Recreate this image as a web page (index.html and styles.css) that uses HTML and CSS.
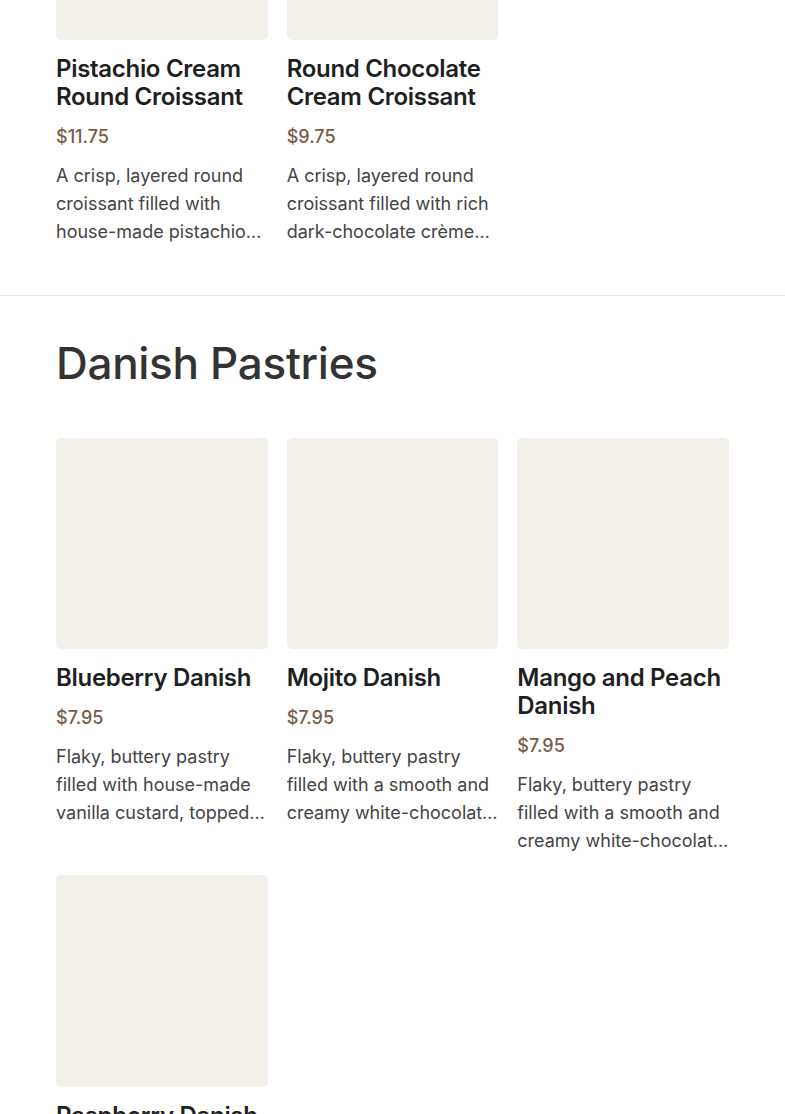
FILE: index.html
```html
<!DOCTYPE html>
<html>
<head>
<meta charset="utf-8">
<link rel="stylesheet" href="styles.css">
</head>
<body>
<main class="page">
  <section class="menu-section first">
    <div class="grid">
      <article class="item">
        <div class="thumb"></div>
        <h3 class="name">Pistachio Cream Round Croissant</h3>
        <div class="price">$11.75</div>
        <p class="desc">A crisp, layered round croissant filled with house-made pistachio cream, finished with crushed pistachios.</p>
      </article>
      <article class="item">
        <div class="thumb"></div>
        <h3 class="name">Round Chocolate Cream Croissant</h3>
        <div class="price">$9.75</div>
        <p class="desc">A crisp, layered round croissant filled with rich dark-chocolate crème pâtissière and finished with chocolate.</p>
      </article>
    </div>
  </section>
  <section class="menu-section">
    <h2 class="section-title">Danish Pastries</h2>
    <div class="grid">
      <article class="item">
        <div class="thumb"></div>
        <h3 class="name">Blueberry Danish</h3>
        <div class="price">$7.95</div>
        <p class="desc">Flaky, buttery pastry filled with house-made vanilla custard, topped with fresh blueberries.</p>
      </article>
      <article class="item">
        <div class="thumb"></div>
        <h3 class="name">Mojito Danish</h3>
        <div class="price">$7.95</div>
        <p class="desc">Flaky, buttery pastry filled with a smooth and creamy white-chocolate mint cream with lime.</p>
      </article>
      <article class="item">
        <div class="thumb"></div>
        <h3 class="name">Mango and Peach Danish</h3>
        <div class="price">$7.95</div>
        <p class="desc">Flaky, buttery pastry filled with a smooth and creamy white-chocolate cream, mango and peach.</p>
      </article>
      <article class="item">
        <div class="thumb"></div>
        <h3 class="name">Raspberry Danish</h3>
        <div class="price">$7.95</div>
        <p class="desc">Flaky, buttery pastry filled with house-made vanilla custard and raspberries.</p>
      </article>
    </div>
  </section>
</main>
</body>
</html>
```
FILE: styles.css
```css
html, body {
  margin: 0;
  padding: 0;
  background: #ffffff;
}
body {
  font-family: Inter, "Liberation Sans", sans-serif;
  color: #222222;
}
.page {
  margin-top: -172px;
}
.menu-section {
  padding: 0 56px 49px;
  border-bottom: 1px solid #e6e6e6;
}
.menu-section + .menu-section {
  padding-top: 41px;
  border-bottom: none;
}
.section-title {
  margin: 0 0 49px;
  font-size: 44px;
  line-height: 52px;
  font-weight: 500;
  color: #333333;
  letter-spacing: -0.3px;
}
.grid {
  display: grid;
  grid-template-columns: repeat(3, 1fr);
  column-gap: 19px;
  row-gap: 20px;
}
.item {
  display: flex;
  flex-direction: column;
}
.thumb {
  aspect-ratio: 1 / 1;
  background: #f3f0e9;
  border-radius: 5px;
}
.name {
  margin: 15px 0 0;
  font-size: 24px;
  line-height: 28px;
  font-weight: 600;
  color: #1f1f1f;
  letter-spacing: -0.3px;
}
.price {
  margin-top: 12px;
  font-size: 18px;
  line-height: 28px;
  font-weight: 500;
  color: #7b5b45;
}
.desc {
  margin: 11px 0 0;
  font-size: 18px;
  line-height: 28px;
  color: #444444;
  display: -webkit-box;
  -webkit-line-clamp: 3;
  -webkit-box-orient: vertical;
  overflow: hidden;
}
```
